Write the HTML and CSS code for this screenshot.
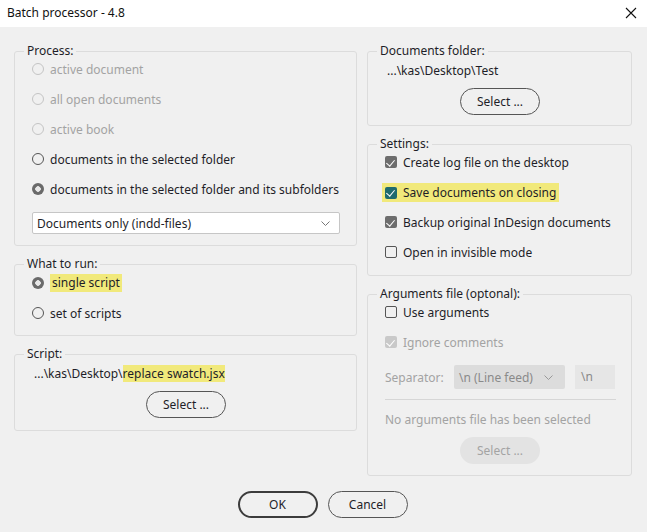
FILE: index.html
```html
<!DOCTYPE html>
<html lang="en">
<head>
  <meta charset="UTF-8">
  <title>Batch processor - 4.8</title>
  <link rel="stylesheet" href="styles.css">
</head>
<body>
  <div class="titlebar">
    <span class="title">Batch processor - 4.8</span>
    <svg class="close" width="12" height="12" viewBox="0 0 12 12"><path d="M1 1L11 11M11 1L1 11" stroke="#111" stroke-width="1.1" fill="none"/></svg>
  </div>

  <div class="dialog">
    <div class="columns">
      <div class="col col-left">

        <fieldset class="panel panel-process">
          <legend>Process:</legend>
          <div class="row disabled"><span class="radio"></span>active document</div>
          <div class="row disabled"><span class="radio"></span>all open documents</div>
          <div class="row disabled"><span class="radio"></span>active book</div>
          <div class="row"><span class="radio"></span>documents in the selected folder</div>
          <div class="row"><span class="radio on"></span>documents in the selected folder and its subfolders</div>
          <div class="dropdown">
            <span>Documents only (indd-files)</span>
            <svg width="9" height="5" viewBox="0 0 9 5"><path d="M0.5 0.5L4.5 4.5L8.5 0.5" stroke="#777" fill="none"/></svg>
          </div>
        </fieldset>

        <fieldset class="panel panel-run">
          <legend>What to run:</legend>
          <div class="row"><span class="radio on"></span><span class="mark">single script</span></div>
          <div class="row"><span class="radio"></span>set of scripts</div>
        </fieldset>

        <fieldset class="panel panel-script">
          <legend>Script:</legend>
          <div class="path">...\kas\Desktop\<span class="mark">replace swatch.jsx</span></div>
          <div class="btn-row"><button class="btn">Select ...</button></div>
        </fieldset>
      </div>

      <div class="col col-right">
        <fieldset class="panel panel-docs">
          <legend>Documents folder:</legend>
          <div class="path">...\kas\Desktop\Test</div>
          <div class="btn-row"><button class="btn">Select ...</button></div>
        </fieldset>

        <fieldset class="panel panel-settings">
          <legend>Settings:</legend>
          <div class="row check-row"><span class="check on"></span>Create log file on the desktop</div>
          <div class="row check-row"><span class="mark mark-row"><span class="check on teal"></span>Save documents on closing</span></div>
          <div class="row check-row"><span class="check on"></span>Backup original InDesign documents</div>
          <div class="row check-row"><span class="check"></span>Open in invisible mode</div>
        </fieldset>

        <fieldset class="panel panel-args">
          <legend>Arguments file (optonal):</legend>
          <div class="row check-row"><span class="check"></span>Use arguments</div>
          <div class="row check-row disabled"><span class="check on dim"></span>Ignore comments</div>
          <div class="sep-row">
            <span class="sep-label">Separator:</span>
            <div class="dropdown dropdown-off">
              <span>\n (Line feed)</span>
              <svg width="9" height="5" viewBox="0 0 9 5"><path d="M0.5 0.5L4.5 4.5L8.5 0.5" stroke="#999" fill="none"/></svg>
            </div>
            <div class="sep-input">\n</div>
          </div>
          <div class="divider"></div>
          <div class="row disabled">No arguments file has been selected</div>
          <div class="btn-row"><button class="btn btn-off">Select ...</button></div>
        </fieldset>
      </div>
    </div>

    <div class="actions">
      <button class="btn btn-default">OK</button>
      <button class="btn">Cancel</button>
    </div>
  </div>
</body>
</html>
```

FILE: styles.css
```css
*{
  box-sizing: border-box;
}
body{
  margin: 0;
  width: 647px;
  height: 532px;
  overflow: hidden;
  font-family: "Noto Sans", "Open Sans", sans-serif;
  font-size: 12px;
  color: #1e1e28;
  background: #f0f0f0;
}
.titlebar{
  height: 27px;
  background: #fff;
  display: flex;
  align-items: center;
  justify-content: space-between;
  padding: 0 10px 2px 7px;
}
.title{
  color: #111;
}
.dialog{
  padding: 16px 15px 0 14px;
}
.columns{
  display: flex;
  gap: 10px;
  align-items: flex-start;
}
.col-left{
  width: 343px;
}
.col-right{
  width: 265px;
}
.panel{
  margin: 0 0 10px 0;
  border: 1px solid #dcdcdc;
  border-radius: 3px;
  padding: 0 16px 10px 17px;
  min-width: 0;
}
.panel legend{
  line-height: 16px;
  padding: 0 3px;
  margin-left: -8px;
  color: #1e1e28;
}
.row{
  display: flex;
  align-items: center;
  height: 20px;
  margin-top: 10px;
  white-space: nowrap;
}
.panel legend + .row{
  margin-top: 0;
}
.disabled{
  color: #a3a3a3;
}
.radio{
  width: 12px;
  height: 12px;
  border-radius: 50%;
  border: 1px solid #555;
  margin-right: 6px;
  flex: none;
  background: #f0f0f0;
}
.disabled .radio{
  border-color: #c4c4c4;
}
.radio.on{
  border: none;
  background: radial-gradient(circle, #e8e8e8 0 2.5px, #6a6a6a 3px);
}
.mark{
  background: #f1e97b;
  padding: 0 2px;
  line-height: 18px;
}
.mark-row{
  display: flex;
  align-items: center;
  margin-left: -3px;
  padding: 0 3px;
  height: 19px;
  margin-top: 1px;
}
.check{
  width: 12px;
  height: 12px;
  border: 1px solid #555;
  border-radius: 2px;
  margin-right: 6px;
  flex: none;
  position: relative;
}
.check.on{
  border: none;
  background: #6d6d6d;
}
.check.teal{
  background: #1f6b6e;
}
.check.dim{
  background: #c9c9c9;
}
.check.on::after{
  content: "";
  position: absolute;
  left: 3px;
  top: 1.5px;
  width: 4px;
  height: 7px;
  border: solid #fff;
  border-width: 0 1.6px 1.6px 0;
  transform: rotate(40deg);
}
.dropdown{
  margin-top: 13px;
  height: 22px;
  background: #fff;
  border: 1px solid #c6c6c6;
  border-radius: 2px;
  display: flex;
  align-items: center;
  justify-content: space-between;
  padding: 0 9px 0 4px;
}
.panel-process{
  padding-bottom: 11px;
}
.panel-run legend + .row{
  margin-top: 1px;
}
.panel-run{
  padding-bottom: 12px;
}
.path{
  height: 20px;
  line-height: 20px;
  margin-top: 2px;
  white-space: nowrap;
}
.panel-script .path,
.panel-docs .path{
  padding-left: 2px;
}
.panel-script .path .mark{
  padding: 0;
}
.btn-row{
  display: flex;
  justify-content: center;
  margin-top: 7px;
}
.btn{
  width: 80px;
  height: 27px;
  border: 1px solid #555;
  border-radius: 14px;
  background: #f0f0f0;
  font-family: inherit;
  font-size: 12px;
  color: #1e1e28;
  padding: 0;
}
.btn-off{
  border: none;
  background: #e3e3e3;
  color: #a3a3a3;
}
.btn-default{
  border: 2px solid #3c3c3c;
}
.panel-script{
  padding-bottom: 12px;
}
.panel-docs{
  padding-bottom: 10px;
}
.panel-settings{
  padding-bottom: 13px;
}
.sep-row{
  display: flex;
  align-items: center;
  margin-top: 13px;
  height: 24px;
  color: #a3a3a3;
}
.sep-label{
  width: 69px;
}
.dropdown-off{
  margin-top: 0;
  width: 111px;
  height: 24px;
  background: #dcdcdc;
  border: none;
  color: #8a8a8a;
  padding: 0 12px 0 5px;
}
.sep-input{
  margin-left: 10px;
  width: 40px;
  height: 24px;
  line-height: 24px;
  background: #e6e6e6;
  padding-left: 6px;
  color: #8a8a8a;
}
.divider{
  margin-top: 10px;
  height: 1px;
  background: #d6d6d6;
  margin-right: -1px;
}
.panel-args .divider + .row{
  margin-top: 9px;
}
.panel-args .disabled + .btn-row{
  margin-top: 8px;
}
.panel-args{
  padding-bottom: 11px;
  margin-bottom: 0;
}
.actions{
  display: flex;
  justify-content: center;
  gap: 10px;
  margin-top: 15px;
  padding-right: 1px;
}
```
